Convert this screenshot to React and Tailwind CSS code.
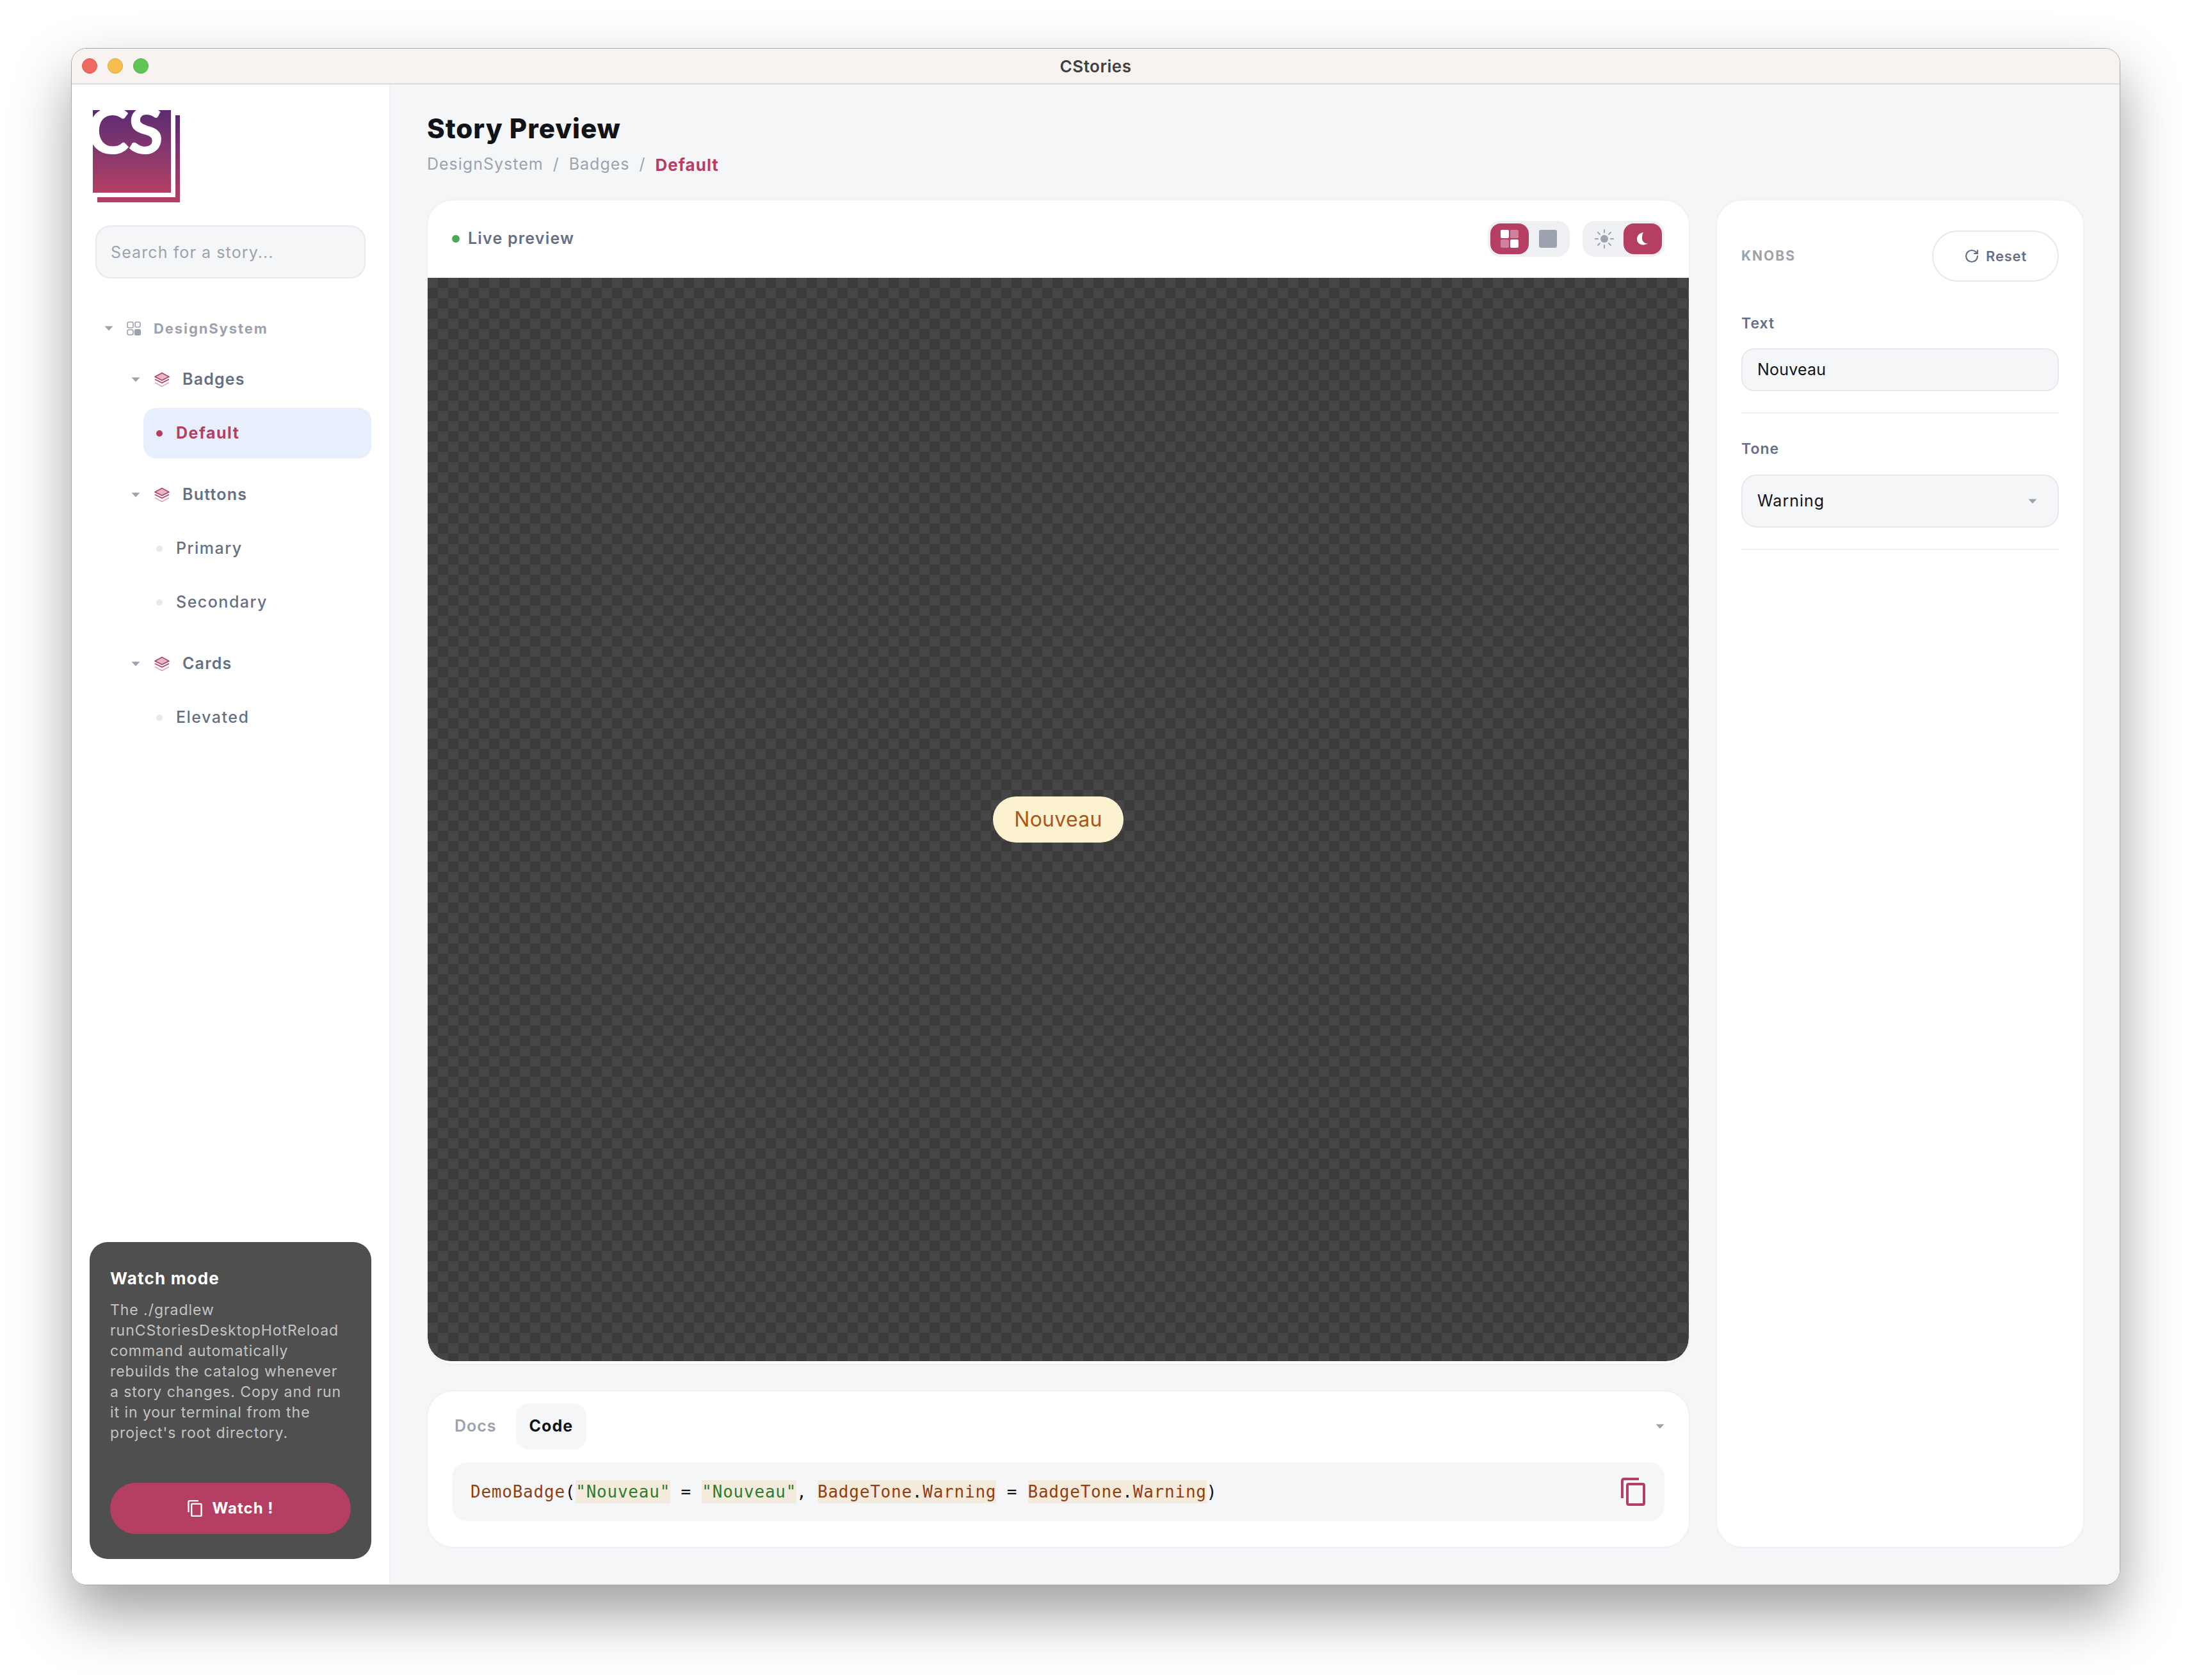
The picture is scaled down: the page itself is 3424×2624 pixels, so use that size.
import { RotateCw } from 'lucide-react'

function Caret({ className = '' }) {
  return (
    <svg width="14" height="8" viewBox="0 0 14 8" className={className}>
      <path d="M0.5 0.5h13L7 7.5z" fill="#9ca3af" />
    </svg>
  )
}

function LayersIcon() {
  return (
    <svg width="24" height="24" viewBox="0 0 24 24" fill="none" className="shrink-0">
      <path d="M12 1.500 23 7.500 12 13 1 7.500z" fill="#e4b8c6" stroke="#b43f63" strokeWidth="1.600" strokeLinejoin="round" />
      <path d="M1 11.500 12 17l11-5.500" stroke="#b43f63" strokeWidth="1.600" />
      <path d="M1 16.500 12 22.500l11-6" stroke="#e0a8ba" strokeWidth="1.600" />
    </svg>
  )
}

function StackIcon() {
  return (
    <svg width="22" height="22" viewBox="0 0 22 22" fill="none" className="shrink-0">
      <rect x="1" y="1" width="9" height="9" rx="2.500" stroke="#9ca3af" strokeWidth="1.600" />
      <rect x="13" y="1" width="8" height="8" rx="2.500" stroke="#9ca3af" strokeWidth="1.600" />
      <rect x="1" y="13" width="9" height="8" rx="2.500" stroke="#9ca3af" strokeWidth="1.600" />
      <rect x="12" y="12" width="10" height="10" rx="2.500" fill="#9ca3af" />
    </svg>
  )
}

function CopyIcon({ color, width, height }) {
  return (
    <svg width={width} height={height} viewBox="0 0 38 44" fill="none" className="shrink-0">
      <path d="M2 32V5q0-3 3-3h23" stroke={color} strokeWidth="4" />
      <rect x="10" y="10" width="26" height="32" rx="2" stroke={color} strokeWidth="4" />
    </svg>
  )
}

function SunIcon() {
  return (
    <svg width="30" height="30" viewBox="0 0 30 30" fill="none" stroke="#9ca3af" strokeWidth="2" strokeLinecap="round">
      <circle cx="15" cy="15" r="6" fill="#9ca3af" stroke="none" />
      <path d="M15 1v4M15 25v4M1 15h4M25 15h4M5 5l3 3M22 22l3 3M5 25l3-3M22 8l3-3" />
    </svg>
  )
}

function MoonIcon() {
  return (
    <svg width="18" height="20" viewBox="0 0 18 20">
      <path d="M10 0C4 1 0 5 0 10.500 0 16 4.500 19.500 9.500 19.500c3 0 5.500-1 7.500-2.500-5 1-9-3-9-8 0-3.500.5-6.500 2-9z" fill="#fff" />
    </svg>
  )
}

function Logo() {
  return (
    <div className="relative w-[136px] h-[144px] overflow-hidden">
      <div className="absolute left-[7px] top-[8px] w-[129px] h-[136px] bg-gradient-to-b from-[#5b2a72] to-[#b43f63]">
        <div className="w-[122px] h-[128px] bg-white" />
      </div>
      <div className="absolute left-0 top-0 w-[122px] h-[129px] overflow-hidden bg-gradient-to-b from-[#5b2a72] to-[#b43f63]">
        <span className="absolute left-[-9px] top-[-31px] font-[family-name:Lato] font-black text-[100px] leading-[120px] tracking-[-2px] text-white">CS</span>
      </div>
    </div>
  )
}

function TreeGroup({ label, stories }) {
  return (
    <div className="flex flex-col gap-[8px]">
      <div className="h-[72px] flex items-center pl-[93px]">
        <Caret />
        <span className="ml-[22px]"><LayersIcon /></span>
        <span className="ml-[20px] text-[25px] font-semibold tracking-[1.2px] text-[#667085]">{label}</span>
      </div>
      <div className="flex flex-col gap-[5px]">
        {stories.map((s) => (
          <div
            key={s.name}
            className={
              s.active
                ? 'ml-[112px] w-[356px] h-[79px] rounded-[20px] bg-[#e8effc] flex items-center pl-[20px]'
                : 'ml-[112px] w-[356px] h-[79px] flex items-center pl-[20px]'
            }
          >
            <span className={s.active ? 'w-[10px] h-[10px] rounded-full bg-[#b43f63]' : 'w-[10px] h-[10px] rounded-full bg-[#e8e9ee]'} />
            <span className={s.active ? 'ml-[21px] text-[25px] font-bold tracking-[1.5px] text-[#b43f63]' : 'ml-[21px] text-[25px] font-medium tracking-[1.5px] text-[#667085]'}>
              {s.name}
            </span>
          </div>
        ))}
      </div>
    </div>
  )
}

function Sidebar() {
  return (
    <aside className="w-[498px] shrink-0 bg-white border-r-2 border-[#f0f1f4] flex flex-col pb-[40px]">
      <div className="pl-[33px] pt-[40px]">
        <Logo />
      </div>
      <div className="mt-[36px] ml-[37px] w-[422px] h-[83px] rounded-[24px] bg-[#f5f6f8] border-2 border-[#e8e9ee] flex items-center pl-[22px] pt-[2px] text-[25px] tracking-[1.1px] text-[#9ca3af]">
        Search for a story...
      </div>
      <div className="mt-[42px]">
        <div className="h-[72px] flex items-center pl-[51px]">
          <Caret />
          <span className="ml-[21px]"><StackIcon /></span>
          <span className="ml-[20px] text-[22px] font-bold tracking-[1.9px] text-[#9ca3af]">DesignSystem</span>
        </div>
        <div className="mt-[8px] flex flex-col gap-[21px]">
          <TreeGroup label="Badges" stories={[{ name: 'Default', active: true }]} />
          <TreeGroup label="Buttons" stories={[{ name: 'Primary' }, { name: 'Secondary' }]} />
          <TreeGroup label="Cards" stories={[{ name: 'Elevated' }]} />
        </div>
      </div>
      <div className="mt-auto ml-[28px] w-[440px] h-[495px] rounded-[28px] bg-[#4f4f4f] px-[32px] pt-[41px] flex flex-col">
        <h3 className="text-[26px] leading-[32px] font-bold tracking-[1.2px] text-white">Watch mode</h3>
        <p className="mt-[17px] text-[23px] leading-[32px] tracking-[0.95px] text-[#c4c4c4] whitespace-pre-line">
          {"The ./gradlew\nrunCStoriesDesktopHotReload\ncommand automatically\nrebuilds the catalog whenever\na story changes. Copy and run\nit in your terminal from the\nproject's root directory."}
        </p>
        <button className="mt-auto mb-[39px] h-[80px] w-[376px] rounded-full bg-[#b43f63] flex items-center justify-center gap-[16px] text-[24px] font-bold tracking-[1px] text-white">
          <CopyIcon color="#fff" width={23} height={26} />
          Watch !
        </button>
      </div>
    </aside>
  )
}

function PreviewCard() {
  return (
    <section className="h-[1821px] bg-white border-2 border-[#f0f1f4] rounded-[42px] flex flex-col overflow-hidden pb-[4px]">
      <header className="h-[121px] shrink-0 border-b-2 border-[#f0f1f4] flex items-center px-[38px]">
        <span className="w-[12px] h-[12px] rounded-full bg-[#4caa55]" />
        <span className="ml-[13px] text-[25px] font-semibold tracking-[1.2px] text-[#667085]">Live preview</span>
        <div className="ml-auto flex gap-[20px]">
          <div className="w-[128px] h-[56px] rounded-[20px] bg-[#eff0f4] p-[4px] flex items-center">
            <span className="w-[60px] h-[48px] rounded-[16px] bg-[#b43f63] flex items-center justify-center">
              <span className="grid grid-cols-2 gap-[2px] w-[28px] h-[28px]">
                <span className="bg-white rounded-[2px]" />
                <span className="bg-[#d080a0] rounded-[2px]" />
                <span className="bg-[#d080a0] rounded-[2px]" />
                <span className="bg-white rounded-[2px]" />
              </span>
            </span>
            <span className="w-[60px] flex items-center justify-center">
              <span className="w-[28px] h-[28px] rounded-[3px] bg-[#9ca3af]" />
            </span>
          </div>
          <div className="w-[128px] h-[56px] rounded-[20px] bg-[#eff0f4] p-[4px] flex items-center">
            <span className="w-[60px] flex items-center justify-center">
              <SunIcon />
            </span>
            <span className="w-[60px] h-[48px] rounded-[16px] bg-[#b43f63] flex items-center justify-center">
              <MoonIcon />
            </span>
          </div>
        </div>
      </header>
      <div className="flex-1 rounded-b-[36px] bg-[repeating-conic-gradient(#3b3b3b_0_25%,#464646_0_50%)] bg-[length:32px_32px] flex items-center justify-center">
        <span className="h-[72px] w-[204px] rounded-full bg-[#fdf2cf] flex items-center justify-center text-[32px] tracking-[0.3px] text-[#a8551f]">
          Nouveau
        </span>
      </div>
    </section>
  )
}

function Hl({ children, className }) {
  return <span className={`bg-[#f5ebdc] inline-block h-[36px] leading-[36px] ${className}`}>{children}</span>
}

function CodeCard() {
  return (
    <section className="mt-[39px] h-[247px] bg-white border-2 border-[#f0f1f4] rounded-[42px] px-[38px] pt-[19px]">
      <div className="flex items-center h-[72px]">
        <span className="ml-[4px] text-[25px] font-semibold tracking-[1px] text-[#9ca3af]">Docs</span>
        <span className="ml-[30px] h-[72px] px-[21px] rounded-[20px] bg-[#f5f6f8] flex items-center text-[25px] font-bold tracking-[1px] text-[#111318]">Code</span>
        <Caret className="ml-auto" />
      </div>
      <div className="mt-[20px] h-[92px] rounded-[24px] bg-[#f5f6f8] flex items-center pl-[29px] pr-[30px]">
        <code className="font-[family-name:'DejaVu_Sans_Mono',monospace] text-[26px] tracking-[0.77px] text-[#8f3f14] whitespace-pre">
          DemoBadge<span className="text-[#111318]">(</span>
          <Hl className="text-[#2e7d32]">"Nouveau"</Hl>
          <span className="text-[#111318]"> = </span>
          <Hl className="text-[#2e7d32]">"Nouveau"</Hl>
          <span className="text-[#111318]">, </span>
          <Hl>BadgeTone<span className="text-[#111318]">.</span>Warning</Hl>
          <span className="text-[#111318]"> = </span>
          <Hl>BadgeTone<span className="text-[#111318]">.</span>Warning</Hl>
          <span className="text-[#111318]">)</span>
        </code>
        <span className="ml-auto"><CopyIcon color="#b43f63" width={38} height={44} /></span>
      </div>
    </section>
  )
}

function KnobsCard() {
  return (
    <aside className="w-[576px] shrink-0 bg-white border-2 border-[#f0f1f4] rounded-[42px] px-[38px] pt-[47px]">
      <div className="flex items-center justify-between">
        <span className="text-[21px] font-bold tracking-[2px] text-[#9ca3af]">KNOBS</span>
        <button className="w-[198px] h-[80px] rounded-full border-2 border-[#e8e9ee] bg-white flex items-center justify-center gap-[10px] text-[22px] font-semibold tracking-[0.8px] text-[#667085]">
          <RotateCw size={24} strokeWidth={2.2} />
          Reset
        </button>
      </div>
      <label className="block mt-[50px] h-[30px] leading-[30px] text-[23px] font-semibold tracking-[1px] text-[#667085]">Text</label>
      <div className="mt-[24px] h-[67px] rounded-[20px] border-2 border-[#e8e9ee] bg-[#f5f6f8] flex items-center pl-[23px] text-[25px] tracking-[0.2px] text-[#111318]">Nouveau</div>
      <div className="mt-[33px] h-[2px] bg-[#f0f1f4]" />
      <label className="block mt-[40px] h-[30px] leading-[30px] text-[23px] font-semibold tracking-[1px] text-[#667085]">Tone</label>
      <div className="mt-[25px] h-[83px] rounded-[24px] border-2 border-[#e8e9ee] bg-[#f5f6f8] flex items-center pl-[23px] pr-[32px] text-[25px] tracking-[1px] text-[#111318]">
        Warning
        <Caret className="ml-auto" />
      </div>
      <div className="mt-[33px] h-[2px] bg-[#f0f1f4]" />
    </aside>
  )
}

export default function App() {
  return (
    <div className="w-[3424px] h-[2624px] bg-white pl-[111px] pt-[75px] font-[family-name:Inter] overflow-hidden">
      <div className="w-[3201px] h-[2401px] rounded-[24px] overflow-hidden flex flex-col border border-[#a8a8a8] shadow-[0_44px_90px_rgba(0,0,0,0.38)] relative">
        <div className="h-[56px] shrink-0 bg-[#f8f3f1] border-b-2 border-[#dcdcde] grid grid-cols-[1fr_auto_1fr] items-center px-[16px]">
          <div className="flex gap-[16px]">
            <span className="w-[24px] h-[24px] rounded-full bg-[#ee6a5f] border border-[#d9584e]" />
            <span className="w-[24px] h-[24px] rounded-full bg-[#f5be4f] border border-[#dca540]" />
            <span className="w-[24px] h-[24px] rounded-full bg-[#61c555] border border-[#52ad48]" />
          </div>
          <span className="text-[26px] font-semibold tracking-[0.5px] text-[#3f3f3f]">CStories</span>
          <div />
        </div>
        <div className="flex-1 flex min-h-0">
          <Sidebar />
          <main className="flex-1 min-w-0 bg-[#f5f6f8] pl-[56px]">
            <h1 className="ml-[1px] mt-[41px] text-[42px] leading-[56px] font-extrabold tracking-[1px] text-[#111318]">Story Preview</h1>
            <nav className="ml-[1px] mt-[12px] h-[32px] flex items-center text-[25px] tracking-[1px] text-[#9ca3af]">
              DesignSystem
              <span className="mx-[15px]">/</span>
              Badges
              <span className="mx-[15px]">/</span>
              <span className="text-[26px] font-bold text-[#b43f63]">Default</span>
            </nav>
            <div className="mt-[38px] flex gap-[40px]">
              <div className="w-[1974px] shrink-0">
                <PreviewCard />
                <CodeCard />
              </div>
              <KnobsCard />
            </div>
          </main>
        </div>
      </div>
    </div>
  )
}
